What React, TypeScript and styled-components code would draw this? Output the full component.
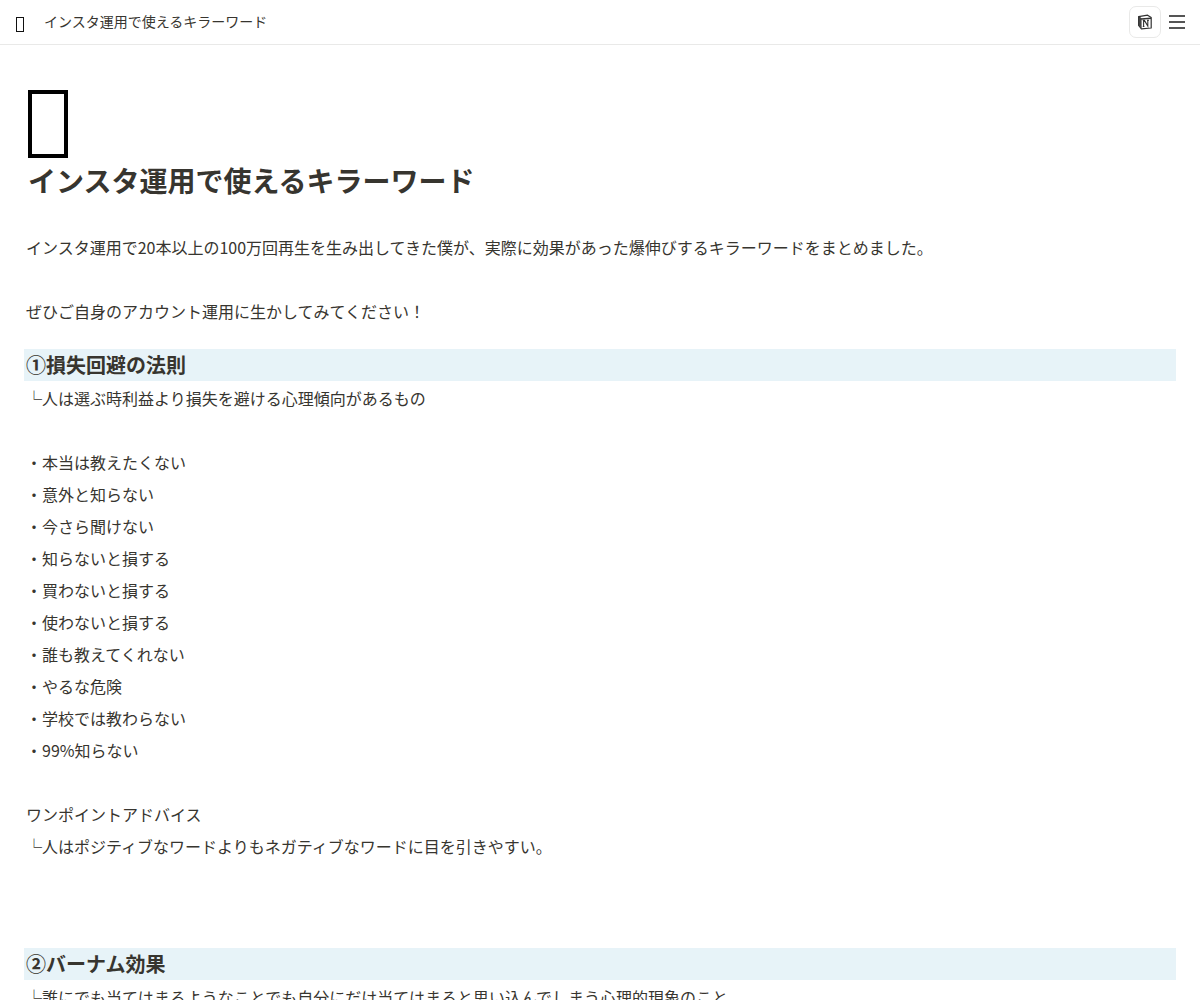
import React from 'react'
import styled, { createGlobalStyle } from 'styled-components'

const GlobalStyle = createGlobalStyle`
  html, body { margin: 0; padding: 0; background: #fff; overflow: hidden; height: 1000px; }
  body { font-family: "Noto Sans CJK JP", "Noto Sans", sans-serif; color: rgb(55, 53, 47); }
`

const Header = styled.header`
  display: flex;
  align-items: center;
  height: 44px;
  border-bottom: 1px solid #e9e9e8;
  padding: 0 15px 0 16px;
`

const HeaderEmoji = styled.span`
  box-sizing: border-box;
  width: 8px;
  height: 15px;
  margin: 4px 20px 0 0;
  border: 1.5px solid #111;
`

const HeaderTitle = styled.div`
  flex: 1;
  font-size: 14px;
  line-height: 20px;
  padding-bottom: 2px;
`

const NotionButton = styled.div`
  box-sizing: border-box;
  width: 32px;
  height: 32px;
  border: 1px solid #e9e9e8;
  border-radius: 7px;
  display: flex;
  align-items: center;
  justify-content: center;
`

const MenuButton = styled.div`
  width: 16px;
  margin-left: 8px;
  display: flex;
  flex-direction: column;
  gap: 4px;
`

const MenuLine = styled.span`
  height: 2px;
  background: #555;
`

const Page = styled.main`
  padding: 45px 24px 0;
`

const BigEmoji = styled.div`
  box-sizing: border-box;
  width: 40px;
  height: 68px;
  margin-left: 4px;
  border: 4px solid #000;
`

const Title = styled.h1`
  margin: 0 0 29px 4px;
  font-size: 28px;
  font-weight: 700;
  line-height: 44px;
`

const Line = styled.div`
  font-size: 16px;
  line-height: 32px;
  min-height: 32px;
  padding-left: 2px;
`

const Heading = styled.h3`
  margin: 22px 0 1px;
  font-size: 20px;
  font-weight: 700;
  line-height: 32px;
  padding-left: 2px;
  background: #e7f3f8;
`

const Corner = styled.span`
  display: inline-block;
  width: 16px;
  text-align: right;
`

const keywords = [
  '本当は教えたくない',
  '意外と知らない',
  '今さら聞けない',
  '知らないと損する',
  '買わないと損する',
  '使わないと損する',
  '誰も教えてくれない',
  'やるな危険',
  '学校では教わらない',
  '99%知らない',
]

function NotionIcon() {
  return (
    <svg width="16" height="16" viewBox="0 0 16 16" fill="none">
      <path d="M1.6 2.6 10.6 1.2 14.2 3.6V14L4.4 14.8 1.6 11.4Z" fill="#fff" stroke="#333" strokeWidth="1.2" strokeLinejoin="round" />
      <path d="M1.8 2.8 4.4 5 14 4.2" stroke="#333" strokeWidth="1.4" />
      <path d="M1.8 3 4.6 5.2V14.4L1.8 11.2Z" fill="#444" />
      <path d="M6.6 12.4V6.4H7.4L10.8 12V6.2M5.8 6.4H7.6M10 6.2H12M5.8 12.5H7.4" stroke="#333" strokeWidth="1.1" />
    </svg>
  )
}

export default function App() {
  return (
    <>
      <GlobalStyle />
      <Header>
        <HeaderEmoji />
        <HeaderTitle>インスタ運用で使えるキラーワード</HeaderTitle>
        <NotionButton><NotionIcon /></NotionButton>
        <MenuButton>
          <MenuLine />
          <MenuLine />
          <MenuLine />
        </MenuButton>
      </Header>
      <Page>
        <BigEmoji />
        <Title>インスタ運用で使えるキラーワード</Title>
        <Line>インスタ運用で20本以上の100万回再生を生み出してきた僕が、実際に効果があった爆伸びするキラーワードをまとめました。</Line>
        <Line />
        <Line>ぜひご自身のアカウント運用に生かしてみてください！</Line>
        <Heading>①損失回避の法則</Heading>
        <Line><Corner>└</Corner>人は選ぶ時利益より損失を避ける心理傾向があるもの</Line>
        <Line />
        {keywords.map(word => (
          <Line key={word}><Corner>・</Corner>{word}</Line>
        ))}
        <Line />
        <Line>ワンポイントアドバイス</Line>
        <Line><Corner>└</Corner>人はポジティブなワードよりもネガティブなワードに目を引きやすい。</Line>
        <Line />
        <Line />
        <Heading>②バーナム効果</Heading>
        <Line><Corner>└</Corner>誰にでも当てはまるようなことでも自分にだけ当てはまると思い込んでしまう心理的現象のこと</Line>
      </Page>
    </>
  )
}
